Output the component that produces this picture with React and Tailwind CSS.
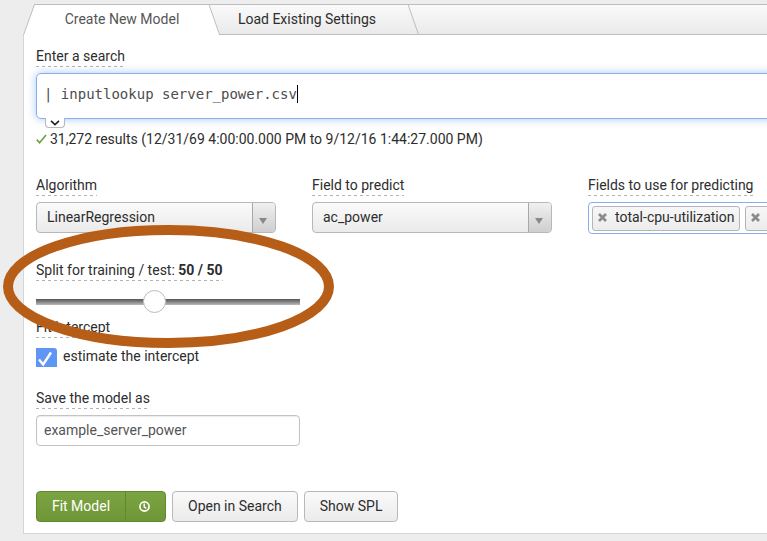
import React from "react";

function Label({ htmlFor, children }) {
  return (
    <label
      htmlFor={htmlFor}
      className="block w-fit whitespace-nowrap bg-[repeating-linear-gradient(90deg,#b3b3b3_0px,#b3b3b3_3px,transparent_3px,transparent_6px)] bg-[length:100%_1px] bg-bottom bg-no-repeat pb-px leading-5"
    >
      {children}
    </label>
  );
}

function Slant({ active }) {
  return (
    <svg width="11" height="31" viewBox="0 0 11 31" className="block shrink-0" aria-hidden="true">
      <defs>
        <linearGradient id="tabShade" x1="0" y1="0" x2="0" y2="1">
          <stop offset="0" stopColor="#fafafa" />
          <stop offset="1" stopColor="#eaeaea" />
        </linearGradient>
      </defs>
      <rect width="11" height="31" fill="url(#tabShade)" />
      {active && <path d="M0 0L11 31H0Z" fill="#fff" />}
      <path d="M0 .5H11" stroke="#bdbdbd" />
      <path d={active ? "M10 30.5H11" : "M0 30.5H11"} stroke="#bdbdbd" />
      <path d="M0 .5L10.5 30.5" stroke="#bdbdbd" fill="none" />
    </svg>
  );
}

function Tabs() {
  return (
    <div role="tablist" className="flex h-[31px]">
      <svg width="12" height="31" viewBox="0 0 12 31" className="block shrink-0" aria-hidden="true">
        <path d="M12 0L0 31H12Z" fill="#fff" />
        <path d="M.5 31L11.5 .5H12" stroke="#bdbdbd" fill="none" />
      </svg>
      <button
        role="tab"
        aria-selected="true"
        className="w-[174px] shrink-0 border-t border-[#bdbdbd] bg-white pb-0.5 text-[#555]"
      >
        Create New Model
      </button>
      <Slant active />
      <button
        role="tab"
        aria-selected="false"
        className="w-[188px] shrink-0 border-y border-[#bdbdbd] bg-gradient-to-b from-[#fafafa] to-[#eaeaea] pr-[14px] pb-0.5"
      >
        Load Existing Settings
      </button>
      <Slant />
      <div className="grow border-y border-[#bdbdbd] bg-gradient-to-b from-[#fafafa] to-[#eaeaea]" />
    </div>
  );
}

function Dropdown({ id, label, value }) {
  return (
    <div className="flex w-60 shrink-0 flex-col gap-1.5">
      <Label htmlFor={id}>{label}</Label>
      <div className="relative">
        <select
          id={id}
          defaultValue={value}
          className="block h-[31px] w-full appearance-none rounded border border-[#b8b8b8] bg-gradient-to-b from-[#fafafa] to-[#ebebeb] pr-8 pb-0.5 pl-[10px] outline-none"
        >
          <option>{value}</option>
        </select>
        <span className="pointer-events-none absolute inset-y-px right-px flex w-[23px] items-center justify-center rounded-r-[3px] border-l border-[#a8a8a8] bg-gradient-to-b from-[#f0f0f0] to-[#cfcfcf] pt-1.5 pr-0.5">
          <svg width="8" height="6" viewBox="0 0 8 6" aria-hidden="true">
            <path d="M0 0H8L4 6Z" fill="#888" />
          </svg>
        </span>
      </div>
    </div>
  );
}

function Token({ field, children }) {
  return (
    <span className="flex h-[25px] shrink-0 items-center gap-2 rounded-[3px] border border-[#b5b5b5] bg-gradient-to-b from-[#f7f7f7] to-[#ececec] px-[5px] pb-0.5 whitespace-nowrap">
      <button aria-label={"Remove " + field}>
        <svg width="9" height="9" viewBox="0 0 9 9" className="block" aria-hidden="true">
          <path d="M1 1L8 8M8 1L1 8" stroke="#8a8a8a" strokeWidth="2.6" />
        </svg>
      </button>
      <span className="min-w-5">{children}</span>
    </span>
  );
}

const plainButton =
  "h-[31px] rounded border border-[#b8b8b8] bg-gradient-to-b from-[#fafafa] to-[#ebebeb] px-[15px] pb-0.5 whitespace-nowrap";

export default function App() {
  return (
    <div className="min-h-screen overflow-hidden bg-[#ededed] pt-1 pl-[23px] font-[Roboto,sans-serif] text-sm leading-5 text-[#2d2d2d]">
      <Tabs />
      <main className="border-b border-l border-[#d6d6d6] bg-white pt-[11px] pb-[11px] pl-3">
        <Label htmlFor="search">Enter a search</Label>
        <div className="-mr-3 mt-1.5 flex h-[46px] items-center rounded-[5px] border border-[#86b0ea] bg-white pb-1 pl-[7px] shadow-[0_0_9px_rgba(82,150,236,0.5)]">
          <input
            id="search"
            defaultValue="| inputlookup server_power.csv"
            className="[field-sizing:content] bg-transparent font-['DejaVu_Sans_Mono',monospace] text-sm text-[#4d4d4d] outline-none"
          />
          <span className="h-[18px] w-px bg-black" />
        </div>
        <button
          aria-label="Expand search"
          className="relative -mt-px ml-[9px] flex h-[10px] w-5 items-center justify-center rounded-b border border-t-0 border-[#b8b8b8] bg-white"
        >
          <svg width="10" height="6" viewBox="0 0 10 6" aria-hidden="true">
            <path d="M1 .8L5 4.6L9 .8" fill="none" stroke="#222" strokeWidth="1.6" />
          </svg>
        </button>
        <p className="mt-px flex items-center gap-[3px] whitespace-nowrap">
          <svg width="11" height="10" viewBox="0 0 11 10" aria-hidden="true">
            <path d="M.8 5.6L3.6 8.7L10 1" fill="none" stroke="#6ba03a" strokeWidth="1.6" />
          </svg>
          31,272 results (12/31/69 4:00:00.000 PM to 9/12/16 1:44:27.000 PM)
        </p>

        <div className="mt-[26px] flex gap-9">
          <Dropdown id="algorithm" label="Algorithm" value="LinearRegression" />
          <Dropdown id="target" label="Field to predict" value="ac_power" />
          <div role="group" aria-label="Fields to use for predicting" className="flex w-60 shrink-0 flex-col gap-1.5">
            <Label>Fields to use for predicting</Label>
            <div className="flex h-8 items-center gap-[5px] overflow-hidden rounded border border-[#86b0ea] bg-white px-[3px]">
              <Token field="total-cpu-utilization">total-cpu-utilization</Token>
              <Token field="second field" />
            </div>
          </div>
        </div>

        <div className="relative mt-[26px] w-[264px]">
          <Label htmlFor="split">
            Split for training / test: <b className="font-bold">50 / 50</b>
          </Label>
          <input
            id="split"
            type="range"
            min="10"
            max="100"
            defaultValue="50"
            className="mt-[9px] block h-6 w-full appearance-none bg-transparent outline-none [&::-webkit-slider-runnable-track]:h-1.5 [&::-webkit-slider-runnable-track]:bg-gradient-to-b [&::-webkit-slider-runnable-track]:from-[#555] [&::-webkit-slider-runnable-track]:to-[#bbb] [&::-webkit-slider-thumb]:-mt-[9px] [&::-webkit-slider-thumb]:size-[23px] [&::-webkit-slider-thumb]:appearance-none [&::-webkit-slider-thumb]:rounded-full [&::-webkit-slider-thumb]:border [&::-webkit-slider-thumb]:border-[#bbb] [&::-webkit-slider-thumb]:bg-white"
          />
          <svg
            width="332"
            height="124"
            viewBox="0 0 332 124"
            className="pointer-events-none absolute -top-[35px] -left-[33px] z-10 max-w-none"
            aria-hidden="true"
          >
            <ellipse cx="165.5" cy="61.5" rx="160.5" ry="56.5" fill="none" stroke="#b65e17" strokeWidth="10" />
          </svg>
        </div>

        <div className="mt-[3px]">
          <Label htmlFor="intercept">Fit intercept</Label>
        </div>
        <div className="mt-[10px] flex h-[19px] gap-1.5">
          <span className="relative">
            <input
              id="intercept"
              type="checkbox"
              defaultChecked
              className="block h-[19px] w-[21px] appearance-none rounded-tr-[3px] bg-[#5f96f6]"
            />
            <svg width="21" height="19" viewBox="0 0 21 19" className="pointer-events-none absolute inset-0" aria-hidden="true">
              <path d="M3 11.5L7.2 16.5L15 4.5" fill="none" stroke="#fff" strokeWidth="2.4" />
            </svg>
          </span>
          <label htmlFor="intercept" className="-mt-0.5 whitespace-nowrap">
            estimate the intercept
          </label>
        </div>

        <div className="mt-[21px] flex flex-col gap-1.5">
          <Label htmlFor="modelName">Save the model as</Label>
          <input
            id="modelName"
            defaultValue="example_server_power"
            className="h-[31px] w-[264px] rounded border border-[#c3c3c3] bg-white px-[7px] pb-0.5 text-[#555] shadow-[inset_0_1px_1px_rgba(0,0,0,0.08)] outline-none"
          />
        </div>

        <div className="mt-[45px] flex gap-1.5">
          <div className="flex h-[31px] overflow-hidden rounded border border-[#5f8a2c] bg-gradient-to-b from-[#7ca442] to-[#6e9637] text-white">
            <button className="w-[88px] pb-0.5 whitespace-nowrap">Fit Model</button>
            <button aria-label="Schedule training" className="flex w-10 items-center justify-center border-l border-[#5f8a2c] pr-0.5">
              <svg width="11" height="11" viewBox="0 0 11 11" aria-hidden="true">
                <circle cx="5.5" cy="5.5" r="4.6" fill="none" stroke="#fff" strokeWidth="1.6" />
                <path d="M5.2 2.5V5.8L7.3 7.5" fill="none" stroke="#fff" strokeWidth="1.4" />
              </svg>
            </button>
          </div>
          <button className={plainButton}>Open in Search</button>
          <button className={plainButton}>Show SPL</button>
        </div>
      </main>
    </div>
  );
}
